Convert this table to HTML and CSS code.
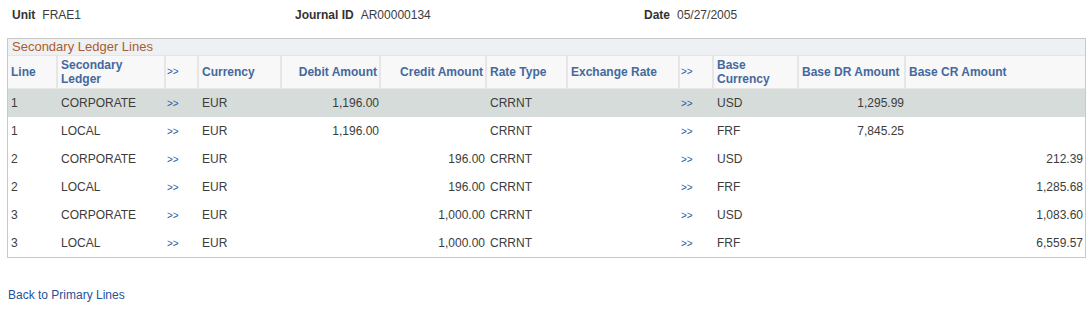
FILE: index.html
```html
<!DOCTYPE html>
<html>
<head>
<meta charset="utf-8">
<link rel="stylesheet" href="styles.css">
</head>
<body>
<div class="page">
  <div class="keys">
    <div class="key k-unit"><span class="lbl">Unit</span><span class="val">FRAE1</span></div>
    <div class="key k-jrnl"><span class="lbl">Journal ID</span><span class="val">AR00000134</span></div>
    <div class="key k-date"><span class="lbl">Date</span><span class="val">05/27/2005</span></div>
  </div>

  <div class="grid">
    <div class="title">Secondary Ledger Lines</div>
    <div class="row head">
      <div class="c">Line</div>
      <div class="c">Secondary<br>Ledger</div>
      <div class="c"><span class="go">&gt;&gt;</span></div>
      <div class="c">Currency</div>
      <div class="c r">Debit Amount</div>
      <div class="c r">Credit Amount</div>
      <div class="c">Rate Type</div>
      <div class="c">Exchange Rate</div>
      <div class="c"><span class="go">&gt;&gt;</span></div>
      <div class="c">Base<br>Currency</div>
      <div class="c">Base DR Amount</div>
      <div class="c last">Base CR Amount</div>
    </div>

    <div class="row data sel">
      <div class="c">1</div><div class="c">CORPORATE</div><div class="c"><span class="go">&gt;&gt;</span></div><div class="c">EUR</div>
      <div class="c r">1,196.00</div><div class="c r"></div><div class="c">CRRNT</div><div class="c"></div>
      <div class="c"><span class="go">&gt;&gt;</span></div><div class="c">USD</div><div class="c r">1,295.99</div><div class="c r last"></div>
    </div>
    <div class="row data">
      <div class="c">1</div><div class="c">LOCAL</div><div class="c"><span class="go">&gt;&gt;</span></div><div class="c">EUR</div>
      <div class="c r">1,196.00</div><div class="c r"></div><div class="c">CRRNT</div><div class="c"></div>
      <div class="c"><span class="go">&gt;&gt;</span></div><div class="c">FRF</div><div class="c r">7,845.25</div><div class="c r last"></div>
    </div>
    <div class="row data">
      <div class="c">2</div><div class="c">CORPORATE</div><div class="c"><span class="go">&gt;&gt;</span></div><div class="c">EUR</div>
      <div class="c r"></div><div class="c r">196.00</div><div class="c">CRRNT</div><div class="c"></div>
      <div class="c"><span class="go">&gt;&gt;</span></div><div class="c">USD</div><div class="c r"></div><div class="c r last">212.39</div>
    </div>
    <div class="row data">
      <div class="c">2</div><div class="c">LOCAL</div><div class="c"><span class="go">&gt;&gt;</span></div><div class="c">EUR</div>
      <div class="c r"></div><div class="c r">196.00</div><div class="c">CRRNT</div><div class="c"></div>
      <div class="c"><span class="go">&gt;&gt;</span></div><div class="c">FRF</div><div class="c r"></div><div class="c r last">1,285.68</div>
    </div>
    <div class="row data">
      <div class="c">3</div><div class="c">CORPORATE</div><div class="c"><span class="go">&gt;&gt;</span></div><div class="c">EUR</div>
      <div class="c r"></div><div class="c r">1,000.00</div><div class="c">CRRNT</div><div class="c"></div>
      <div class="c"><span class="go">&gt;&gt;</span></div><div class="c">USD</div><div class="c r"></div><div class="c r last">1,083.60</div>
    </div>
    <div class="row data">
      <div class="c">3</div><div class="c">LOCAL</div><div class="c"><span class="go">&gt;&gt;</span></div><div class="c">EUR</div>
      <div class="c r"></div><div class="c r">1,000.00</div><div class="c">CRRNT</div><div class="c"></div>
      <div class="c"><span class="go">&gt;&gt;</span></div><div class="c">FRF</div><div class="c r"></div><div class="c r last">6,559.57</div>
    </div>
  </div>

  <div class="back"><a href="#">Back to Primary Lines</a></div>
</div>
</body>
</html>
```

FILE: styles.css
```css
html, body {
  margin: 0;
  padding: 0;
  background: #ffffff;
}
body {
  font-family: "Liberation Sans", Arial, sans-serif;
  font-size: 12px;
  color: #3c3c3c;
}
.page {
  padding: 7px 3px 0 7px;
}
.keys {
  display: flex;
  height: 16px;
  line-height: 16px;
  padding-left: 5px;
}
.key .lbl {
  font-weight: bold;
  color: #333333;
  margin-right: 7px;
}
.key .val {
  color: #3c3c3c;
}
.k-unit { width: 283px; }
.k-jrnl { width: 349px; }
.grid {
  margin-top: 15px;
  width: 1079px;
  box-sizing: border-box;
  border: 1px solid #c9c9c9;
}
.title {
  height: 16px;
  line-height: 16px;
  background: #eef1f3;
  color: #ab5c30;
  font-size: 13px;
  padding-left: 4px;
  border-bottom: 1px solid #e3e5e7;
}
.row {
  display: grid;
  grid-template-columns: 50px 108px 33px 83px 99px 106px 81px 112px 34px 85px 107px 1fr;
}
.row .c {
  box-sizing: border-box;
  padding: 0 2px 0 3px;
  white-space: nowrap;
  overflow: hidden;
}
.row .c.r {
  text-align: right;
}
.head {
  height: 33px;
  background: #f8f8f8;
  border-bottom: 1px solid #e6e6e6;
  box-sizing: border-box;
}
.head .c {
  border-right: 2px solid #e6e6e6;
  display: flex;
  flex-direction: column;
  justify-content: center;
  font-weight: bold;
  color: #44699e;
  line-height: 14px;
}
.head .c.r {
  align-items: flex-end;
}
.head .c.last {
  border-right: none;
}
.data {
  height: 28px;
  line-height: 28px;
}
.data.sel {
  background: #d6dcd9;
}
.go {
  color: #2a5aa8;
  font-size: 10px;
  font-weight: normal;
  margin-left: -2px;
}
.back {
  margin-top: 30px;
  padding-left: 1px;
  line-height: 14px;
}
.back a {
  color: #27519a;
  text-decoration: none;
}
```
